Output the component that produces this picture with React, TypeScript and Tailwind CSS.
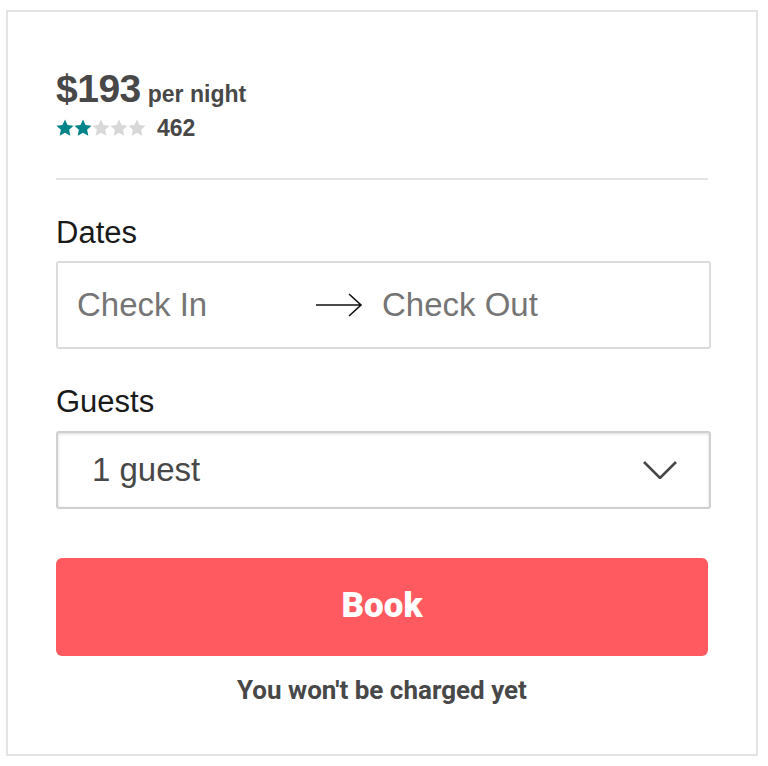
import React from "react";

const sans = { fontFamily: '"Liberation Sans", Arial, sans-serif' };
const roboto = { fontFamily: "Roboto, Arial, sans-serif" };

function Star({ filled }: { filled: boolean }) {
  return (
    <svg viewBox="0 0 24 24" className={`h-[18px] w-[18px] ${filled ? "text-[#008489]" : "text-[#d8d8d8]"}`} aria-hidden="true">
      <path
        fill="currentColor"
        d="M12 0.8l3.4 7.3 8 .9-5.9 5.4 1.6 7.9L12 18.3l-7.1 4 1.6-7.9L.6 9l8-.9z"
      />
    </svg>
  );
}

export default function App() {
  return (
    <div className="min-h-[766px] w-[768px] bg-white pl-[6px] pt-[10px]" style={sans}>
      <div className="h-[746px] w-[752px] border-2 border-[#e4e4e4] px-[48px] pt-[55px]">
        <div className="flex items-baseline gap-[7px] text-[#484848]">
          <span className="text-[39px] font-bold leading-[44px] tracking-[-0.5px]">$193</span>
          <span className="text-[23px] font-bold">per night</span>
        </div>
        <div className="mt-[3px] flex items-center">
          <div className="flex">
            {[0, 1, 2, 3, 4].map((i) => (
              <Star key={i} filled={i < 2} />
            ))}
          </div>
          <span className="ml-[11px] text-[23px] font-bold leading-[26px] text-[#484848]">462</span>
        </div>

        <div className="mt-[37px] h-[2px] bg-[#e4e4e4]" />

        <div className="mt-[35px] text-[31px] font-light leading-[36px] text-[#1a1a1a]">Dates</div>
        <div className="mt-[10px] flex h-[88px] w-[655px] items-center rounded-[3px] border-2 border-[#dcdcdc] pl-[19px]">
          <span className="w-[238px] text-[33px] text-[#757575]">Check In</span>
          <svg viewBox="0 0 48 24" className="h-[24px] w-[48px]" aria-hidden="true">
            <path d="M1 12h45M34 1l12 11-12 11" fill="none" stroke="#111" strokeWidth="1.6" />
          </svg>
          <span className="ml-[19px] text-[33px] text-[#757575]">Check Out</span>
        </div>

        <div className="mt-[35px] text-[31px] font-light leading-[36px] text-[#1a1a1a]">Guests</div>
        <div className="mt-[11px] flex h-[78px] w-[655px] items-center justify-between rounded-[3px] border-2 border-[#d0d0d0] pl-[34px] pr-[32px] shadow-[inset_0_1px_3px_rgba(0,0,0,0.15)]">
          <span className="text-[33px] text-[#484848]">1 guest</span>
          <svg viewBox="0 0 34 18" className="h-[18px] w-[34px]" aria-hidden="true">
            <path d="M1 1l16 16L33 1" fill="none" stroke="#484848" strokeWidth="2.6" />
          </svg>
        </div>

        <button
          type="button"
          className="mt-[49px] flex h-[98px] w-[652px] items-center justify-center rounded-[6px] bg-[#ff5a5f] text-[35px] font-black text-white"
          style={roboto}
        >
          Book
        </button>
        <p className="mt-[19px] text-center text-[26px] font-bold leading-[30px] text-[#484848]" style={roboto}>
          You won&apos;t be charged yet
        </p>
      </div>
    </div>
  );
}
